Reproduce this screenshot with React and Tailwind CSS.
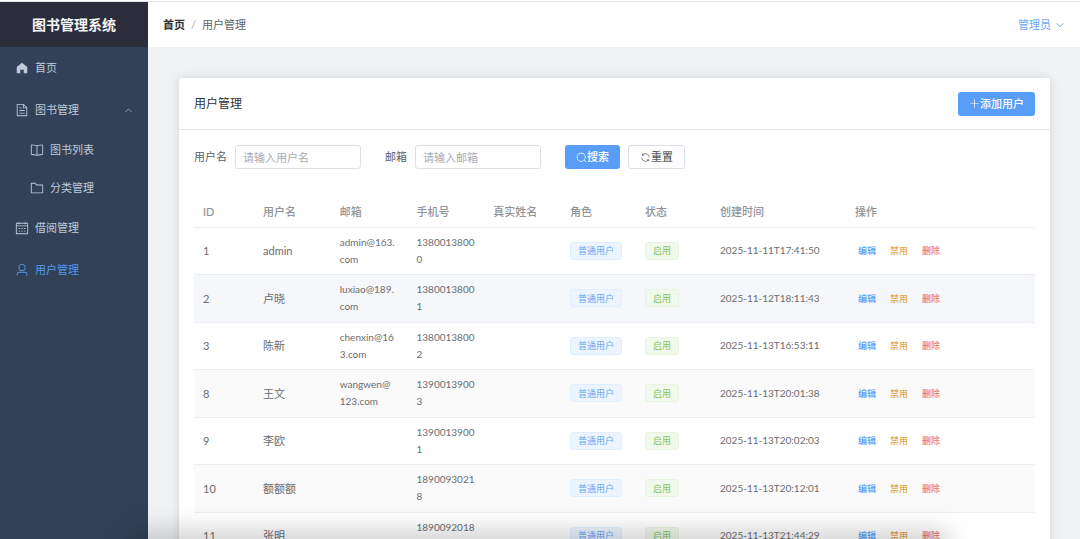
import { Fragment } from "react";

const ICONS = {
  home: "M512 128 128 447.936V896h255.936V640H640v256h255.936V447.936z",
  document:
    "M832 384H576V128H192v768h640zm-26.496-64L640 154.496V320zM160 64h480l256 256v608a32 32 0 0 1-32 32H160a32 32 0 0 1-32-32V96a32 32 0 0 1 32-32m160 448h384v64H320zm0-192h160v64H320zm0 384h384v64H320z",
  reading:
    "m512 863.36 384-54.848v-638.72L525.568 222.72a96 96 0 0 1-27.136 0L128 169.792v638.72zM137.024 106.432l370.432 52.928a32 32 0 0 0 9.088 0l370.432-52.928A64 64 0 0 1 960 169.792v638.72a64 64 0 0 1-54.976 63.36l-388.48 55.488a32 32 0 0 1-9.088 0l-388.48-55.488A64 64 0 0 1 64 808.512v-638.72a64 64 0 0 1 73.024-63.36zM480 192h64v704h-64z",
  folder:
    "M128 192v640h768V320H485.76L357.504 192zm-32-64h287.872l128.384 128H928a32 32 0 0 1 32 32v576a32 32 0 0 1-32 32H96a32 32 0 0 1-32-32V160a32 32 0 0 1 32-32",
  calendar:
    "M128 384v512h768V192H768v32a32 32 0 1 1-64 0v-32H320v32a32 32 0 0 1-64 0v-32H128v128h768v64zm192-256h384V96a32 32 0 1 1 64 0v32h160a32 32 0 0 1 32 32v768a32 32 0 0 1-32 32H96a32 32 0 0 1-32-32V160a32 32 0 0 1 32-32h160V96a32 32 0 0 1 64 0zm-32 384h64a32 32 0 0 1 0 64h-64a32 32 0 0 1 0-64m0 192h64a32 32 0 1 1 0 64h-64a32 32 0 1 1 0-64m192-192h64a32 32 0 0 1 0 64h-64a32 32 0 0 1 0-64m0 192h64a32 32 0 1 1 0 64h-64a32 32 0 1 1 0-64m192-192h64a32 32 0 1 1 0 64h-64a32 32 0 1 1 0-64m0 192h64a32 32 0 1 1 0 64h-64a32 32 0 1 1 0-64",
  user: "M512 512a192 192 0 1 0 0-384 192 192 0 0 0 0 384m0 64a256 256 0 1 1 0-512 256 256 0 0 1 0 512m320 320v-96a96 96 0 0 0-96-96H288a96 96 0 0 0-96 96v96a32 32 0 1 1-64 0v-96a160 160 0 0 1 160-160h448a160 160 0 0 1 160 160v96a32 32 0 1 1-64 0",
  arrow:
    "M831.872 340.864 512 652.672 192.128 340.864a30.592 30.592 0 0 0-42.752 0 29.12 29.12 0 0 0 0 41.6L489.664 714.24a32 32 0 0 0 44.672 0l340.288-331.712a29.12 29.12 0 0 0 0-41.728 30.592 30.592 0 0 0-42.752 0z",
  search:
    "m795.904 750.72 124.992 124.928a32 32 0 0 1-45.248 45.248L750.656 795.904a416 416 0 1 1 45.248-45.248zM480 832a352 352 0 1 0 0-704 352 352 0 0 0 0 704",
  plus: "M480 480V128a32 32 0 0 1 64 0v352h352a32 32 0 1 1 0 64H544v352a32 32 0 1 1-64 0V544H128a32 32 0 0 1 0-64z",
  refresh:
    "M771.776 794.88A384 384 0 0 1 128 512h64a320 320 0 0 0 555.712 216.448H654.72a32 32 0 1 1 0-64h149.056a32 32 0 0 1 32 32v148.928a32 32 0 1 1-64 0v-50.56zM276.288 295.616h92.992a32 32 0 0 1 0 64H220.16a32 32 0 0 1-32-32V178.56a32 32 0 0 1 64 0v50.56A384 384 0 0 1 896.128 512h-64a320 320 0 0 0-555.776-216.384z",
};

const Icon = ({ name, className }) => (
  <svg viewBox="0 0 1024 1024" fill="currentColor" aria-hidden="true" className={`shrink-0 ${className}`}>
    <path d={ICONS[name]} />
  </svg>
);

// "|" marks where a long email may wrap
const users = [
  { id: 1, name: "admin", email: "admin@163.|com", phone: "13800138000", created: "2025-11-11T17:41:50" },
  { id: 2, name: "卢晓", email: "luxiao@189.|com", phone: "13800138001", created: "2025-11-12T18:11:43" },
  { id: 3, name: "陈新", email: "chenxin@16|3.com", phone: "13800138002", created: "2025-11-13T16:53:11" },
  { id: 8, name: "王文", email: "wangwen@|123.com", phone: "13900139003", created: "2025-11-13T20:01:38" },
  { id: 9, name: "李欧", email: "", phone: "13900139001", created: "2025-11-13T20:02:03" },
  { id: 10, name: "额额额", email: "", phone: "18900930218", created: "2025-11-13T20:12:01" },
  { id: 11, name: "张明", email: "", phone: "18900920188", created: "2025-11-13T21:44:29" },
];

const columns = [
  { title: "ID", width: "w-[60px]" },
  { title: "用户名", width: "" },
  { title: "邮箱", width: "" },
  { title: "手机号", width: "" },
  { title: "真实姓名", width: "" },
  { title: "角色", width: "w-[75px]" },
  { title: "状态", width: "w-[75px]" },
  { title: "创建时间", width: "w-[135px]" },
  { title: "操作", width: "w-[189px]" },
];

const MenuItem = ({ icon, label, active }) => (
  <a href="#" className={`flex h-[42px] items-center gap-[6px] px-[15px] ${active ? "text-[#5598ee]" : "text-[#bfcbd9]"}`}>
    <Icon name={icon} className="size-[14px]" />
    {label}
  </a>
);

const SubMenuItem = ({ icon, label }) => (
  <a href="#" className="flex h-[38px] items-center gap-[6px] pl-[30px] text-[#bfcbd9]">
    <Icon name={icon} className="size-[14px]" />
    {label}
  </a>
);

const Sidebar = () => (
  <aside className="w-[148px] shrink-0 bg-[#324157]">
    <div className="flex h-[45px] items-center justify-center bg-[#2b2d3a] text-sm font-bold text-[#f5f6f8]">
      图书管理系统
    </div>
    <nav>
      <MenuItem icon="home" label="首页" />
      <button className="flex h-[42px] w-full items-center gap-[6px] px-[15px] text-[#bfcbd9]">
        <Icon name="document" className="size-[14px]" />
        图书管理
        <Icon name="arrow" className="ml-auto size-[9px] rotate-180" />
      </button>
      <SubMenuItem icon="reading" label="图书列表" />
      <SubMenuItem icon="folder" label="分类管理" />
      <MenuItem icon="calendar" label="借阅管理" />
      <MenuItem icon="user" label="用户管理" active />
    </nav>
  </aside>
);

const Header = () => (
  <header className="flex h-[45px] items-center justify-between bg-white px-[15px]">
    <nav className="flex items-center gap-[6px]">
      <a href="#" className="font-bold text-[#303133]">首页</a>
      <span className="text-[#a8abb2]">/</span>
      <span className="text-[#606266]">用户管理</span>
    </nav>
    <button className="flex items-center gap-1 text-[#6aa8f8]">
      管理员
      <Icon name="arrow" className="size-[10px]" />
    </button>
  </header>
);

const SearchField = ({ id, label, placeholder }) => (
  <div className="mr-6 flex items-center gap-2">
    <label htmlFor={id} className="text-[#606266]">{label}</label>
    <input
      id={id}
      type="text"
      placeholder={placeholder}
      className="h-6 w-[126px] rounded-[3px] border border-[#dcdfe6] bg-white px-[7px] outline-none placeholder:text-[#a8abb2]"
    />
  </div>
);

const UserRow = ({ user }) => (
  <tr className="h-[47px] border-b border-[#ebeef5] even:h-12 even:bg-[#fafafa] nth-2:bg-[#f5f7fa]">
    <td className="px-[9px] text-[11px]">{user.id}</td>
    <td className="px-[9px] text-[11px]">{user.name}</td>
    <td className="px-[9px]">
      {user.email.split("|").map((part) => (
        <Fragment key={part}>
          {part}
          <wbr />
        </Fragment>
      ))}
    </td>
    <td className="px-[9px] break-all">{user.phone}</td>
    <td className="px-[9px]"></td>
    <td className="px-[9px]">
      <span className="inline-flex h-[18px] items-center rounded-[3px] border border-[#e0efff] bg-[#ecf5ff] px-[7px] text-[9px] whitespace-nowrap text-[#6aa8f8]">
        普通用户
      </span>
    </td>
    <td className="px-[9px]">
      <span className="inline-flex h-[18px] items-center rounded-[3px] border border-[#e6f5de] bg-[#f0f9eb] px-[7px] text-[9px] text-[#85c263]">
        启用
      </span>
    </td>
    <td className="px-[9px] whitespace-nowrap">{user.created}</td>
    <td className="px-[9px]">
      <div className="flex gap-[14px] px-[3px] text-[9px] font-medium">
        <button className="text-[#589df8]">编辑</button>
        <button className="text-[#dfa850]">禁用</button>
        <button className="text-[#ee7676]">删除</button>
      </div>
    </td>
  </tr>
);

const UserCard = () => (
  <section className="rounded-[3px] bg-white shadow-[0_0_10px_rgba(0,0,0,0.13)]">
    <div className="flex h-[52px] items-center justify-between border-b border-[#e4e7ed] px-[15px]">
      <h1 className="text-xs text-[#303133]">用户管理</h1>
      <button className="flex h-6 items-center rounded-[3px] bg-[#589df8] px-[11px] font-medium text-white">
        <Icon name="plus" className="size-[11px]" />
        添加用户
      </button>
    </div>

    <div className="p-[15px]">
      <form className="flex items-center">
        <SearchField id="username" label="用户名" placeholder="请输入用户名" />
        <SearchField id="email" label="邮箱" placeholder="请输入邮箱" />
        <button type="button" className="flex h-6 items-center rounded-[3px] bg-[#589df8] px-[11px] font-medium text-white">
          <Icon name="search" className="size-[11px]" />
          搜索
        </button>
        <button
          type="reset"
          className="ml-2 flex h-6 items-center rounded-[3px] border border-[#dcdfe6] bg-white px-[11px] font-medium text-[#606266]"
        >
          <Icon name="refresh" className="size-[11px]" />
          重置
        </button>
      </form>

      <table className="mt-7 w-full table-fixed border-collapse text-left text-[10px] leading-[17px] text-[#6b6d71]">
        <thead>
          <tr className="h-[30px] border-b border-[#ebeef5]">
            {columns.map((col) => (
              <th key={col.title} className={`px-[9px] text-[11px] font-medium text-[#909399] ${col.width}`}>
                {col.title}
              </th>
            ))}
          </tr>
        </thead>
        <tbody>
          {users.map((user) => (
            <UserRow key={user.id} user={user} />
          ))}
        </tbody>
      </table>
    </div>
  </section>
);

export default function App() {
  return (
    <div className="relative flex h-screen flex-col overflow-hidden bg-white font-['Lato','Noto_Sans_CJK_SC',sans-serif] text-[11px] leading-4">
      <div className="h-[2px] shrink-0 border-b border-[#dfe1e3]"></div>
      <div className="flex min-h-0 flex-1">
        <Sidebar />
        <div className="min-w-0 flex-1 bg-[#f0f2f4]">
          <Header />
          <main className="pt-[31px] pr-[30px] pl-[31px]">
            <UserCard />
          </main>
        </div>
      </div>
      {/* soft shade along the bottom edge */}
      <div className="pointer-events-none absolute inset-x-[12%] -bottom-4 h-6 rounded-full bg-black/20 blur-md"></div>
    </div>
  );
}
